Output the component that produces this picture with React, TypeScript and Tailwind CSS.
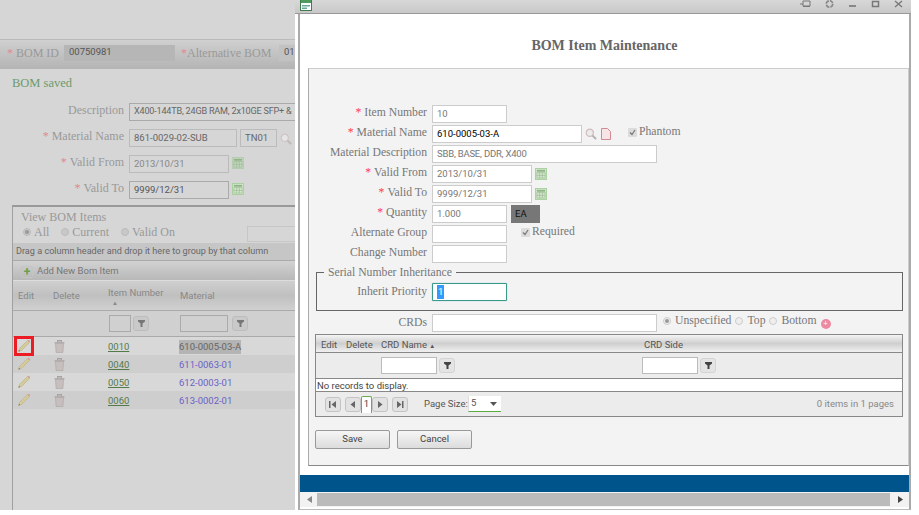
import type { ReactNode } from "react";

const serif = "font-['Liberation_Serif',serif]";
const small = "font-['Roboto',sans-serif] text-[9.5px]";
const tiny = "font-['Roboto',sans-serif] text-[9.1px]";

const Star = () => <span className="text-[#ff3b4e] mr-[3px]">*</span>;

const Calendar = ({ dim }: { dim?: boolean }) => (
  <svg width="12" height="12" viewBox="0 0 13 13" className="shrink-0">
    <rect x="0.5" y="0.5" width="12" height="12" fill={dim ? "#c5d6c0" : "#d2e8cb"} stroke={dim ? "#b4ccae" : "#a8d09c"} />
    <rect x="2" y="2" width="9" height="2" fill="#8fb488" />
    <path d="M2 5h9v6H2zM5 5v6M8 5v6M2 8h9" fill="none" stroke="#9ab894" strokeWidth="0.7" />
  </svg>
);

const Magnifier = () => (
  <svg width="12" height="12" viewBox="0 0 12 12" className="shrink-0">
    <circle cx="4.8" cy="4.8" r="3.6" fill="#ececec" stroke="#d0bcbc" strokeWidth="1.2" />
    <path d="M7.5 7.5l3.6 3.6" stroke="#b8b0b0" strokeWidth="2" />
  </svg>
);

const Pencil = () => (
  <svg width="14" height="14" viewBox="0 0 14 14">
    <path d="M1.5 12.5l1-3L10.5 1.5l2 2-8 8z" fill="#d4cb98" stroke="#b0a87c" strokeWidth="0.5" />
    <path d="M10.5 1.5l2 2 .7-1.3-1.3-1.4z" fill="#d89a9a" />
    <path d="M1.5 12.5l.5-1.6 1.1 1.1z" fill="#666" />
  </svg>
);

const Trash = () => (
  <svg width="11" height="13" viewBox="0 0 11 13">
    <rect x="3.5" y="0.5" width="4" height="1.5" fill="none" stroke="#aaa2a2" />
    <rect x="0.5" y="2" width="10" height="1.5" fill="#b5adad" />
    <path d="M1.5 3.5h8l-.6 9H2.1z" fill="#c7bebe" stroke="#aaa2a2" strokeWidth="0.6" />
  </svg>
);

const FilterBtn = ({ dim }: { dim?: boolean }) => (
  <span
    className={`flex h-[15px] w-[16px] items-center justify-center rounded-[3px] border ${
      dim ? "border-[#bdbdbd] bg-[#c9c9c9]" : "border-[#d4d4d4] bg-[#e4e4e4]"
    }`}
  >
    <svg width="7" height="7" viewBox="0 0 7 7">
      <path d="M0 0h7v1.5L4.5 3.5V7h-2V3.5L0 1.5z" fill={dim ? "#777" : "#444"} />
    </svg>
  </span>
);

const PagerBtn = ({ d }: { d: string }) => (
  <span className="flex h-[15px] w-[16px] items-center justify-center rounded-[3px] border border-[#c4c4c4] bg-[#e2e2e2]">
    <svg width="8" height="7" viewBox="0 0 8 7">
      <path d={d} fill="#666" />
    </svg>
  </span>
);

const Radio = ({ on, dim }: { on?: boolean; dim?: boolean }) => (
  <span
    className={`flex h-[8px] w-[8px] shrink-0 items-center justify-center rounded-full border ${
      dim ? "border-[#bbb] bg-[#c8c8c8]" : "border-[#ccc] bg-[#eee]"
    }`}
  >
    {on && <span className="h-[4px] w-[4px] rounded-full bg-[#999]" />}
  </span>
);

const Check = () => (
  <span className="flex h-[9px] w-[9px] items-center justify-center rounded-[1px] bg-[#dcdcdc]">
    <svg width="7" height="7" viewBox="0 0 7 7">
      <path d="M1 3.5l2 2 3-4.5" fill="none" stroke="#777" strokeWidth="1.2" />
    </svg>
  </span>
);

const Field = ({
  w,
  value,
  dark,
  className = "",
}: {
  w: string;
  value?: string;
  dark?: boolean;
  className?: string;
}) => (
  <div
    className={`${w} ${small} flex h-[18px] items-center border border-[#ccc] bg-white pl-[4px] ${
      dark ? "text-black" : "text-[#777]"
    } ${className}`}
  >
    {value}
  </div>
);

const Row = ({ label, req, children }: { label: string; req?: boolean; children: ReactNode }) => (
  <div className="flex h-[20px] items-start">
    <div className="w-[118px] pt-[1px] text-right leading-[14px] text-[#777]">
      {req && <Star />}
      {label}
    </div>
    <div className="ml-[5px] flex items-center">{children}</div>
  </div>
);

const LeftLabel = ({ label, w, req }: { label: string; w: string; req?: boolean }) => (
  <div className={`${w} text-right leading-[14px] text-[#999]`}>
    {req && <span className="mr-[3px] text-[#e08a8a]">*</span>}
    {label}
  </div>
);

const bomRows = [
  ["0010", "610-0005-03-A"],
  ["0040", "611-0063-01"],
  ["0050", "612-0003-01"],
  ["0060", "613-0002-01"],
];

const LeftPage = () => (
  <div className={`${serif} h-[510px] w-[295px] shrink-0 overflow-hidden bg-[#d6d6d6] text-[12px]`}>
    <div className="h-[39px]" />
    <div className="flex h-[30px] items-center border-t border-[#bbb] bg-gradient-to-b from-[#d0d0d0] to-[#b4b4b4] pb-[4px] pl-[7px]">
      <span className="w-[52px] whitespace-nowrap text-[#999]">
        <span className="text-[#e08a8a]">*</span> BOM ID
      </span>
      <span className={`${small} ml-[5px] flex h-[16px] w-[111px] items-center bg-[#b6b6b6] pl-[5px] text-[#555]`}>00750981</span>
      <span className="ml-[6px] w-[95px] whitespace-nowrap text-[#999]">
        <span className="text-[#e08a8a]">*</span>Alternative BOM
      </span>
      <span className={`${small} ml-[3px] flex h-[16px] flex-1 items-center bg-[#c2c2c2] pl-[5px] text-[#555]`}>01</span>
    </div>
    <div className="mt-[7px] pl-[12px] text-[12.5px] leading-[15px] text-[#6c9a6c]">BOM saved</div>
    <div className="mt-[12px] flex h-[26px] items-start">
      <LeftLabel label="Description" w="w-[124px]" />
      <div className={`${tiny} ml-[5px] flex h-[18px] flex-1 items-center overflow-hidden whitespace-nowrap border border-[#aaa] border-r-0 pl-[4px] tracking-[-0.2px] text-[#666]`}>
        X400-144TB, 24GB RAM, 2x10GE SFP+ &amp;
      </div>
    </div>
    <div className="flex h-[26px] items-start">
      <LeftLabel label="Material Name" w="w-[124px]" req />
      <div className={`${small} ml-[5px] flex h-[18px] w-[108px] items-center border border-[#bbb] pl-[4px] text-[#666]`}>861-0029-02-SUB</div>
      <div className={`${small} ml-[3px] flex h-[18px] w-[37px] items-center border border-[#bbb] pl-[4px] text-[#666]`}>TN01</div>
      <span className="ml-[3px] mt-[4px] opacity-70">
        <Magnifier />
      </span>
    </div>
    <div className="flex h-[26px] items-start">
      <LeftLabel label="Valid From" w="w-[124px]" req />
      <div className={`${small} ml-[5px] flex h-[18px] w-[100px] items-center border border-[#bbb] pl-[4px] text-[#888]`}>2013/10/31</div>
      <span className="ml-[3px] mt-[2px]">
        <Calendar dim />
      </span>
    </div>
    <div className="flex h-[24px] items-start">
      <LeftLabel label="Valid To" w="w-[124px]" req />
      <div className={`${small} ml-[5px] flex h-[18px] w-[100px] items-center border border-[#aaa] pl-[4px] text-[#555]`}>9999/12/31</div>
      <span className="ml-[3px] mt-[2px]">
        <Calendar />
      </span>
    </div>
    <div className="ml-[12px] h-[306px] border-l border-t-2 border-[#999] border-l-[#a0a0a0]">
      <div className="pl-[8px] pt-[3px] leading-[14px] text-[#999]">View BOM Items</div>
      <div className="relative flex h-[19px] items-center pb-[3px] pl-[10px] text-[#999]">
        <Radio on dim />
        <span className="ml-[3px]">All</span>
        <span className="ml-[12px]">
          <Radio dim />
        </span>
        <span className="ml-[3px]">Current</span>
        <span className="ml-[12px]">
          <Radio dim />
        </span>
        <span className="ml-[3px]">Valid On</span>
        <span className="absolute left-[234px] top-[2px] h-[16px] w-[60px] border border-[#c6c6c6]" />
      </div>
      <div className={`${tiny} flex h-[18px] items-center whitespace-nowrap border-b border-[#aaa] bg-[#c6c6c6] pl-[3px] text-[#666]`}>
        Drag a column header and drop it here to group by that column
      </div>
      <div className={`${small} flex h-[20px] items-center border-b border-[#ddd] bg-gradient-to-b from-[#d2d2d2] to-[#b8b8b8] pl-[8px] pt-[2px] text-[#777]`}>
        <span className="flex h-[12px] w-[12px] items-center justify-center rounded-[2px] border border-[#c4c4c4] text-[12px] font-bold leading-none text-[#6aa050]">+</span>
        <span className="ml-[4px]">Add New Bom Item</span>
      </div>
      <div className={`${small} flex h-[30px] items-center border-b border-[#aaa] bg-gradient-to-b from-[#cfcfcf] via-[#c0c0c0] to-[#d0d0d0] pt-[2px] text-[#888]`}>
        <span className="ml-[5px] w-[35px]">Edit</span>
        <span className="w-[55px]">Delete</span>
        <span className="w-[72px] leading-[13px]">
          Item Number
          <span className="block pl-[4px] text-[6px] leading-[8px]">▲</span>
        </span>
        <span>Material</span>
      </div>
      <div className="flex h-[26px] items-center border-b border-[#aaa] bg-[#d0d0d0]">
        <span className="ml-[96px] h-[17px] w-[22px] border border-[#aaa]" />
        <span className="ml-[2px]">
          <FilterBtn dim />
        </span>
        <span className="ml-[31px] h-[17px] w-[48px] border border-[#aaa]" />
        <span className="ml-[4px]">
          <FilterBtn dim />
        </span>
      </div>
      {bomRows.map(([num, mat], i) => (
        <div key={num} className={`${small} flex h-[18px] items-center ${i % 2 ? "bg-[#cecece]" : "bg-[#d8d8d8]"}`}>
          <span className={`ml-[1px] flex h-[20px] w-[20px] items-center justify-center ${i === 0 ? "border-[3px] border-[#ed1c24]" : ""}`}>
            <Pencil />
          </span>
          <span className="ml-[20px] flex w-[11px]">
            <Trash />
          </span>
          <span className="ml-[43px] mt-[3px] w-[71px] text-[#557a4a] underline">{num}</span>
          <span className={`mt-[2px] ${i === 0 ? "bg-[#b4b4b4] text-[#666]" : "text-[#6a62c8]"}`}>{mat}</span>
        </div>
      ))}
    </div>
  </div>
);

const ItemWindow = () => (
  <div className="flex h-[510px] w-[616px] shrink-0 flex-col">
    {/* title bar */}
    <div className="flex h-[14px] items-start justify-between border-b border-[#999] bg-gradient-to-b from-[#d8d8d8] to-[#c8c8c8] pl-[5px] pr-[8px]">
      <svg width="12" height="11" viewBox="0 0 12 11">
        <rect x="0.5" y="0" width="11" height="10.5" fill="#fff" stroke="#3f7d4f" />
        <rect x="1" y="0" width="10" height="3" fill="#4f9a5e" />
        <rect x="2" y="5" width="8" height="1.5" fill="#6a9" />
        <rect x="2" y="7.5" width="5" height="1.5" fill="#6a9" />
      </svg>
      <div className="flex items-center gap-[14px]">
        <svg width="11" height="8" viewBox="0 0 11 8">
          <path d="M0 4h3M3 1h7v5H3zM3 6.5h7" fill="none" stroke="#777" />
        </svg>
        <svg width="9" height="8" viewBox="0 0 9 8">
          <circle cx="4.5" cy="4" r="3.2" fill="none" stroke="#888" strokeWidth="1.6" strokeDasharray="4 1" />
        </svg>
        <svg width="9" height="8" viewBox="0 0 9 8">
          <path d="M1 6h7" stroke="#888" strokeWidth="2" />
        </svg>
        <svg width="9" height="8" viewBox="0 0 9 8">
          <rect x="1.5" y="1.5" width="6" height="5" fill="none" stroke="#777" strokeWidth="1.5" />
        </svg>
        <svg width="9" height="8" viewBox="0 0 9 8">
          <path d="M1 1l7 6M8 1L1 7" stroke="#777" strokeWidth="1.3" />
        </svg>
      </div>
    </div>
    <div className="ml-[3px] flex flex-1 flex-col border-x-2 border-b border-[#aaa] border-b-[#bbb] bg-white">
      <div className={`${serif} flex h-[54px] items-center justify-center pt-[8px] text-[14px] font-bold text-[#666]`}>
        BOM Item Maintenance
      </div>
      <div className={`${serif} ml-[8px] h-[398px] border border-[#ccc] border-b-[#888] border-l-[#aaa] bg-[#f3f3f3] pt-[36px] text-[11.7px]`}>
        <Row label="Item Number" req>
          <Field w="w-[75px]" value="10" />
        </Row>
        <Row label="Material Name" req>
          <Field w="w-[150px]" value="610-0005-03-A" dark />
          <span className="ml-[3px]">
            <Magnifier />
          </span>
          <svg width="10" height="12" viewBox="0 0 10 12" className="ml-[4px]">
            <path d="M.5.5h6l3 3v8H.5z" fill="#f6e4e6" stroke="#d08a94" />
          </svg>
          <span className="ml-[17px] mb-[4px] flex items-center text-[#777]">
            <Check />
            <span className="ml-[2px] leading-[14px]">Phantom</span>
          </span>
        </Row>
        <Row label="Material Description">
          <Field w="w-[225px]" value="SBB, BASE, DDR, X400" className="tracking-[-0.2px]" />
        </Row>
        <Row label="Valid From" req>
          <Field w="w-[100px]" value="2013/10/31" />
          <span className="ml-[3px]">
            <Calendar />
          </span>
        </Row>
        <Row label="Valid To" req>
          <Field w="w-[100px]" value="9999/12/31" />
          <span className="ml-[3px]">
            <Calendar />
          </span>
        </Row>
        <Row label="Quantity" req>
          <Field w="w-[75px]" value="1.000" />
          <span className={`${small} ml-[4px] flex h-[18px] w-[29px] items-center bg-[#777] pl-[4px] text-[#111]`}>EA</span>
        </Row>
        <Row label="Alternate Group">
          <Field w="w-[75px]" />
          <span className="ml-[14px] mb-[4px] flex items-center text-[#777]">
            <Check />
            <span className="ml-[2px] leading-[14px]">Required</span>
          </span>
        </Row>
        <Row label="Change Number">
          <Field w="w-[75px]" />
        </Row>
        {/* fieldset */}
        <div className="relative ml-[7px] mt-[7px] h-[39px] w-[587px] border border-[#666] pt-[10px]">
          <span className="absolute left-[7px] top-[-7px] bg-[#f3f3f3] px-[4px] leading-[14px] text-[#777]">
            Serial Number Inheritance
          </span>
          <div className="flex items-start">
            <div className="w-[110px] pt-[2px] text-right leading-[14px] text-[#777]">Inherit Priority</div>
            <div className={`${small} ml-[5px] flex h-[18px] w-[75px] items-center rounded-[1px] border border-[#3a9a8a] bg-white pl-[4px] shadow-[0_0_1px_#4aa]`}>
              <span className="bg-[#3399ff] px-[1px] text-white">1</span>
            </div>
          </div>
        </div>
        <div className="mt-[3px] flex h-[20px] items-start">
          <div className="w-[118px] pt-[2px] text-right leading-[14px] text-[#777]">CRDs</div>
          <Field w="w-[225px]" className="ml-[5px]" />
          <div className="ml-[6px] flex h-[14px] items-center text-[#777]">
            <Radio on />
            <span className="ml-[4px]">Unspecified</span>
            <span className="ml-[4px]">
              <Radio />
            </span>
            <span className="ml-[4px]">Top</span>
            <span className="ml-[4px]">
              <Radio />
            </span>
            <span className="ml-[4px]">Bottom</span>
            <span className="ml-[4px] mt-[6px] flex h-[10px] w-[10px] items-center justify-center rounded-full bg-[#eb8aa0] text-[8px] font-bold leading-none text-white">+</span>
          </div>
        </div>
        {/* grid */}
        <div className={`${small} ml-[6px] h-[83px] w-[588px] border border-[#888] text-[#555]`}>
          <div className="flex h-[18px] items-center border-b border-[#888] bg-gradient-to-b from-[#f4f4f4] via-[#cfcfcf] to-[#f0f0f0] pt-[3px]">
            <span className="ml-[5px] w-[25px]">Edit</span>
            <span className="w-[35px]">Delete</span>
            <span className="w-[263px] whitespace-nowrap">
              CRD Name <span className="text-[6px]">▲</span>
            </span>
            <span>CRD Side</span>
          </div>
          <div className="flex h-[26px] items-center border-b border-[#888] bg-[#ececec]">
            <span className="ml-[65px] h-[17px] w-[56px] border border-[#bbb] bg-white" />
            <span className="ml-[2px]">
              <FilterBtn />
            </span>
            <span className="ml-[187px] h-[17px] w-[56px] border border-[#bbb] bg-white" />
            <span className="ml-[2px]">
              <FilterBtn />
            </span>
          </div>
          <div className="flex h-[13px] items-center border-b border-[#888] bg-white pl-px pt-[3px] text-[#444]">No records to display.</div>
          <div className="flex h-[24px] items-center bg-[#ececec] pl-[9px] pr-[8px]">
            <PagerBtn d="M0 0h1.5v7H0zM7 0v7L2.5 3.5z" />
            <span className="ml-[4px]">
              <PagerBtn d="M6 0v7L1.5 3.5z" />
            </span>
            <span className="flex h-[17px] w-[11px] items-center justify-center rounded-t-[2px] border border-b-0 border-[#6aaa50] bg-white text-[#444]">1</span>
            <PagerBtn d="M2 0v7l4.5-3.5z" />
            <span className="ml-[4px]">
              <PagerBtn d="M1 0v7l4.5-3.5zM6 0h1.5v7H6z" />
            </span>
            <span className="ml-[16px] w-[44px] whitespace-nowrap">Page Size:</span>
            <span className="relative flex h-[16px] w-[33px] items-center justify-between border-l border-b border-l-[#ddd] border-b-[#5aaa40] bg-white pl-[2px] pr-[4px]">
              5
              <svg width="7" height="4" viewBox="0 0 7 4">
                <path d="M0 0h7L3.5 4z" fill="#555" />
              </svg>
            </span>
            <span className="ml-auto text-[#888]">0 items in 1 pages</span>
          </div>
        </div>
        <div className={`${small} ml-[6px] mt-[13px] flex gap-[7px] text-[#444]`}>
          <span className="flex h-[19px] w-[75px] items-center justify-center rounded-[2px] border border-[#999] bg-gradient-to-b from-[#f6f6f6] to-[#dcdcdc]">Save</span>
          <span className="flex h-[19px] w-[75px] items-center justify-center rounded-[2px] border border-[#999] bg-gradient-to-b from-[#f6f6f6] to-[#dcdcdc]">Cancel</span>
        </div>
      </div>
      <div className="mt-[9px] h-[17px] bg-[#00548c]" />
      <div className="flex h-[15px] items-center bg-[#f2f2f2]">
        <svg width="5" height="7" viewBox="0 0 5 7" className="ml-[7px]">
          <path d="M5 0v7L0 3.5z" fill="#888" />
        </svg>
        <div className="ml-[5px] h-[13px] w-[573px] bg-[#bbb]" />
        <svg width="5" height="7" viewBox="0 0 5 7" className="ml-[8px]">
          <path d="M0 0v7l5-3.5z" fill="#444" />
        </svg>
      </div>
    </div>
  </div>
);

export default function App() {
  return (
    <div className="flex h-[515px] w-[919px] overflow-hidden bg-white">
      <LeftPage />
      <ItemWindow />
    </div>
  );
}
